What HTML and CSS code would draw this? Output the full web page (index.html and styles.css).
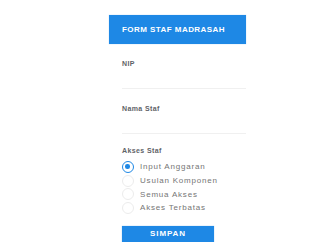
FILE: index.html
```html
<!DOCTYPE html>
<html>
<head>
<meta charset="utf-8">
<link rel="stylesheet" href="styles.css">
</head>
<body>
<div class="card">
  <div class="header">FORM STAF MADRASAH</div>
  <div class="form">
    <div class="field">
      <div class="label">NIP</div>
      <div class="input"></div>
    </div>
    <div class="field">
      <div class="label">Nama Staf</div>
      <div class="input"></div>
    </div>
    <div class="label akses">Akses Staf</div>
    <div class="radios">
      <div class="radio"><span class="dot checked"></span>Input Anggaran</div>
      <div class="radio"><span class="dot"></span>Usulan Komponen</div>
      <div class="radio"><span class="dot"></span>Semua Akses</div>
      <div class="radio"><span class="dot"></span>Akses Terbatas</div>
    </div>
    <div class="btn">SIMPAN</div>
  </div>
</div>
</body>
</html>
```
FILE: styles.css
```css
html, body { margin: 0; padding: 0; background: #fff; }
body { font-family: "Liberation Sans", Arial, sans-serif; }
.card { margin: 15px 0 0 109px; width: 137px; }
.header {
  height: 29px; line-height: 29px; background: #1e88e5; color: #fff;
  font-weight: bold; font-size: 8px; padding-left: 13px; letter-spacing: 0.45px;
  box-shadow: 0 0 1px rgba(30,136,229,0.4);
}
.form { padding-left: 13px; }
.field { padding-top: 15px; }
.label { font-size: 7px; font-weight: bold; color: #5f6368; line-height: 9px; letter-spacing: 0.4px; }
.input { height: 20px; border-bottom: 1px solid #f0f0f0; }
.akses { margin-top: 12px; }
.radios { margin-top: 5px; display: flex; flex-direction: column; }
.radio { display: flex; align-items: center; height: 13.7px; font-size: 8px; color: #757575; letter-spacing: 0.8px; }
.dot { width: 12px; height: 12px; border-radius: 50%; border: 1px solid #ececec; box-sizing: border-box; margin-right: 6px; position: relative; flex: none; }
.dot.checked { border: 1.5px solid #1e88e5; }
.dot.checked::after { content: ""; position: absolute; left: 2.25px; top: 2.25px; width: 4.5px; height: 4.5px; border-radius: 50%; background: #1e88e5; }
.btn {
  margin-top: 11px; width: 92px; height: 16px; line-height: 16px; background: #1e88e5;
  color: #fff; font-weight: bold; font-size: 8px; text-align: center; letter-spacing: 0.9px;
  box-shadow: 0 0 1px rgba(30,136,229,0.5);
}
```
